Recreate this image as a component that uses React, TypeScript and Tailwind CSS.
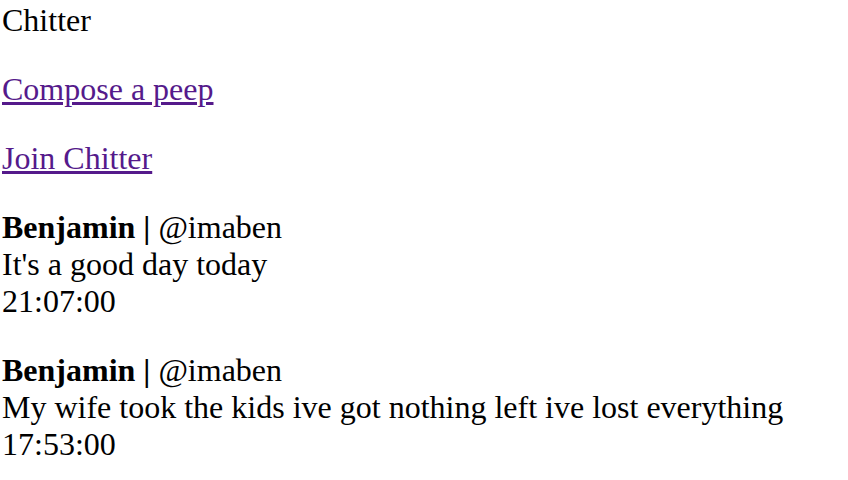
const peeps = [
  { name: "Benjamin", handle: "imaben", body: "It's a good day today", time: "21:07:00" },
  { name: "Benjamin", handle: "imaben", body: "My wife took the kids ive got nothing left ive lost everything", time: "17:53:00" },
]

const App = () => {
  return (
    <div className="min-h-screen bg-white text-black pt-[2px] pl-[2px] text-[32px] leading-[37px] font-['Liberation_Serif',serif]">
      <div>Chitter</div>
      <p className="my-8">
        <a href="#" className="text-[#551a8b] underline">Compose a peep</a>
      </p>
      <p className="my-8">
        <a href="#" className="text-[#551a8b] underline">Join Chitter</a>
      </p>
      {peeps.map((peep, index) => (
        <div key={index} className="my-8">
          <div>
            <b>{peep.name} |</b> @{peep.handle}
          </div>
          <div>{peep.body}</div>
          <div>{peep.time}</div>
        </div>
      ))}
    </div>
  )
}

export default App
